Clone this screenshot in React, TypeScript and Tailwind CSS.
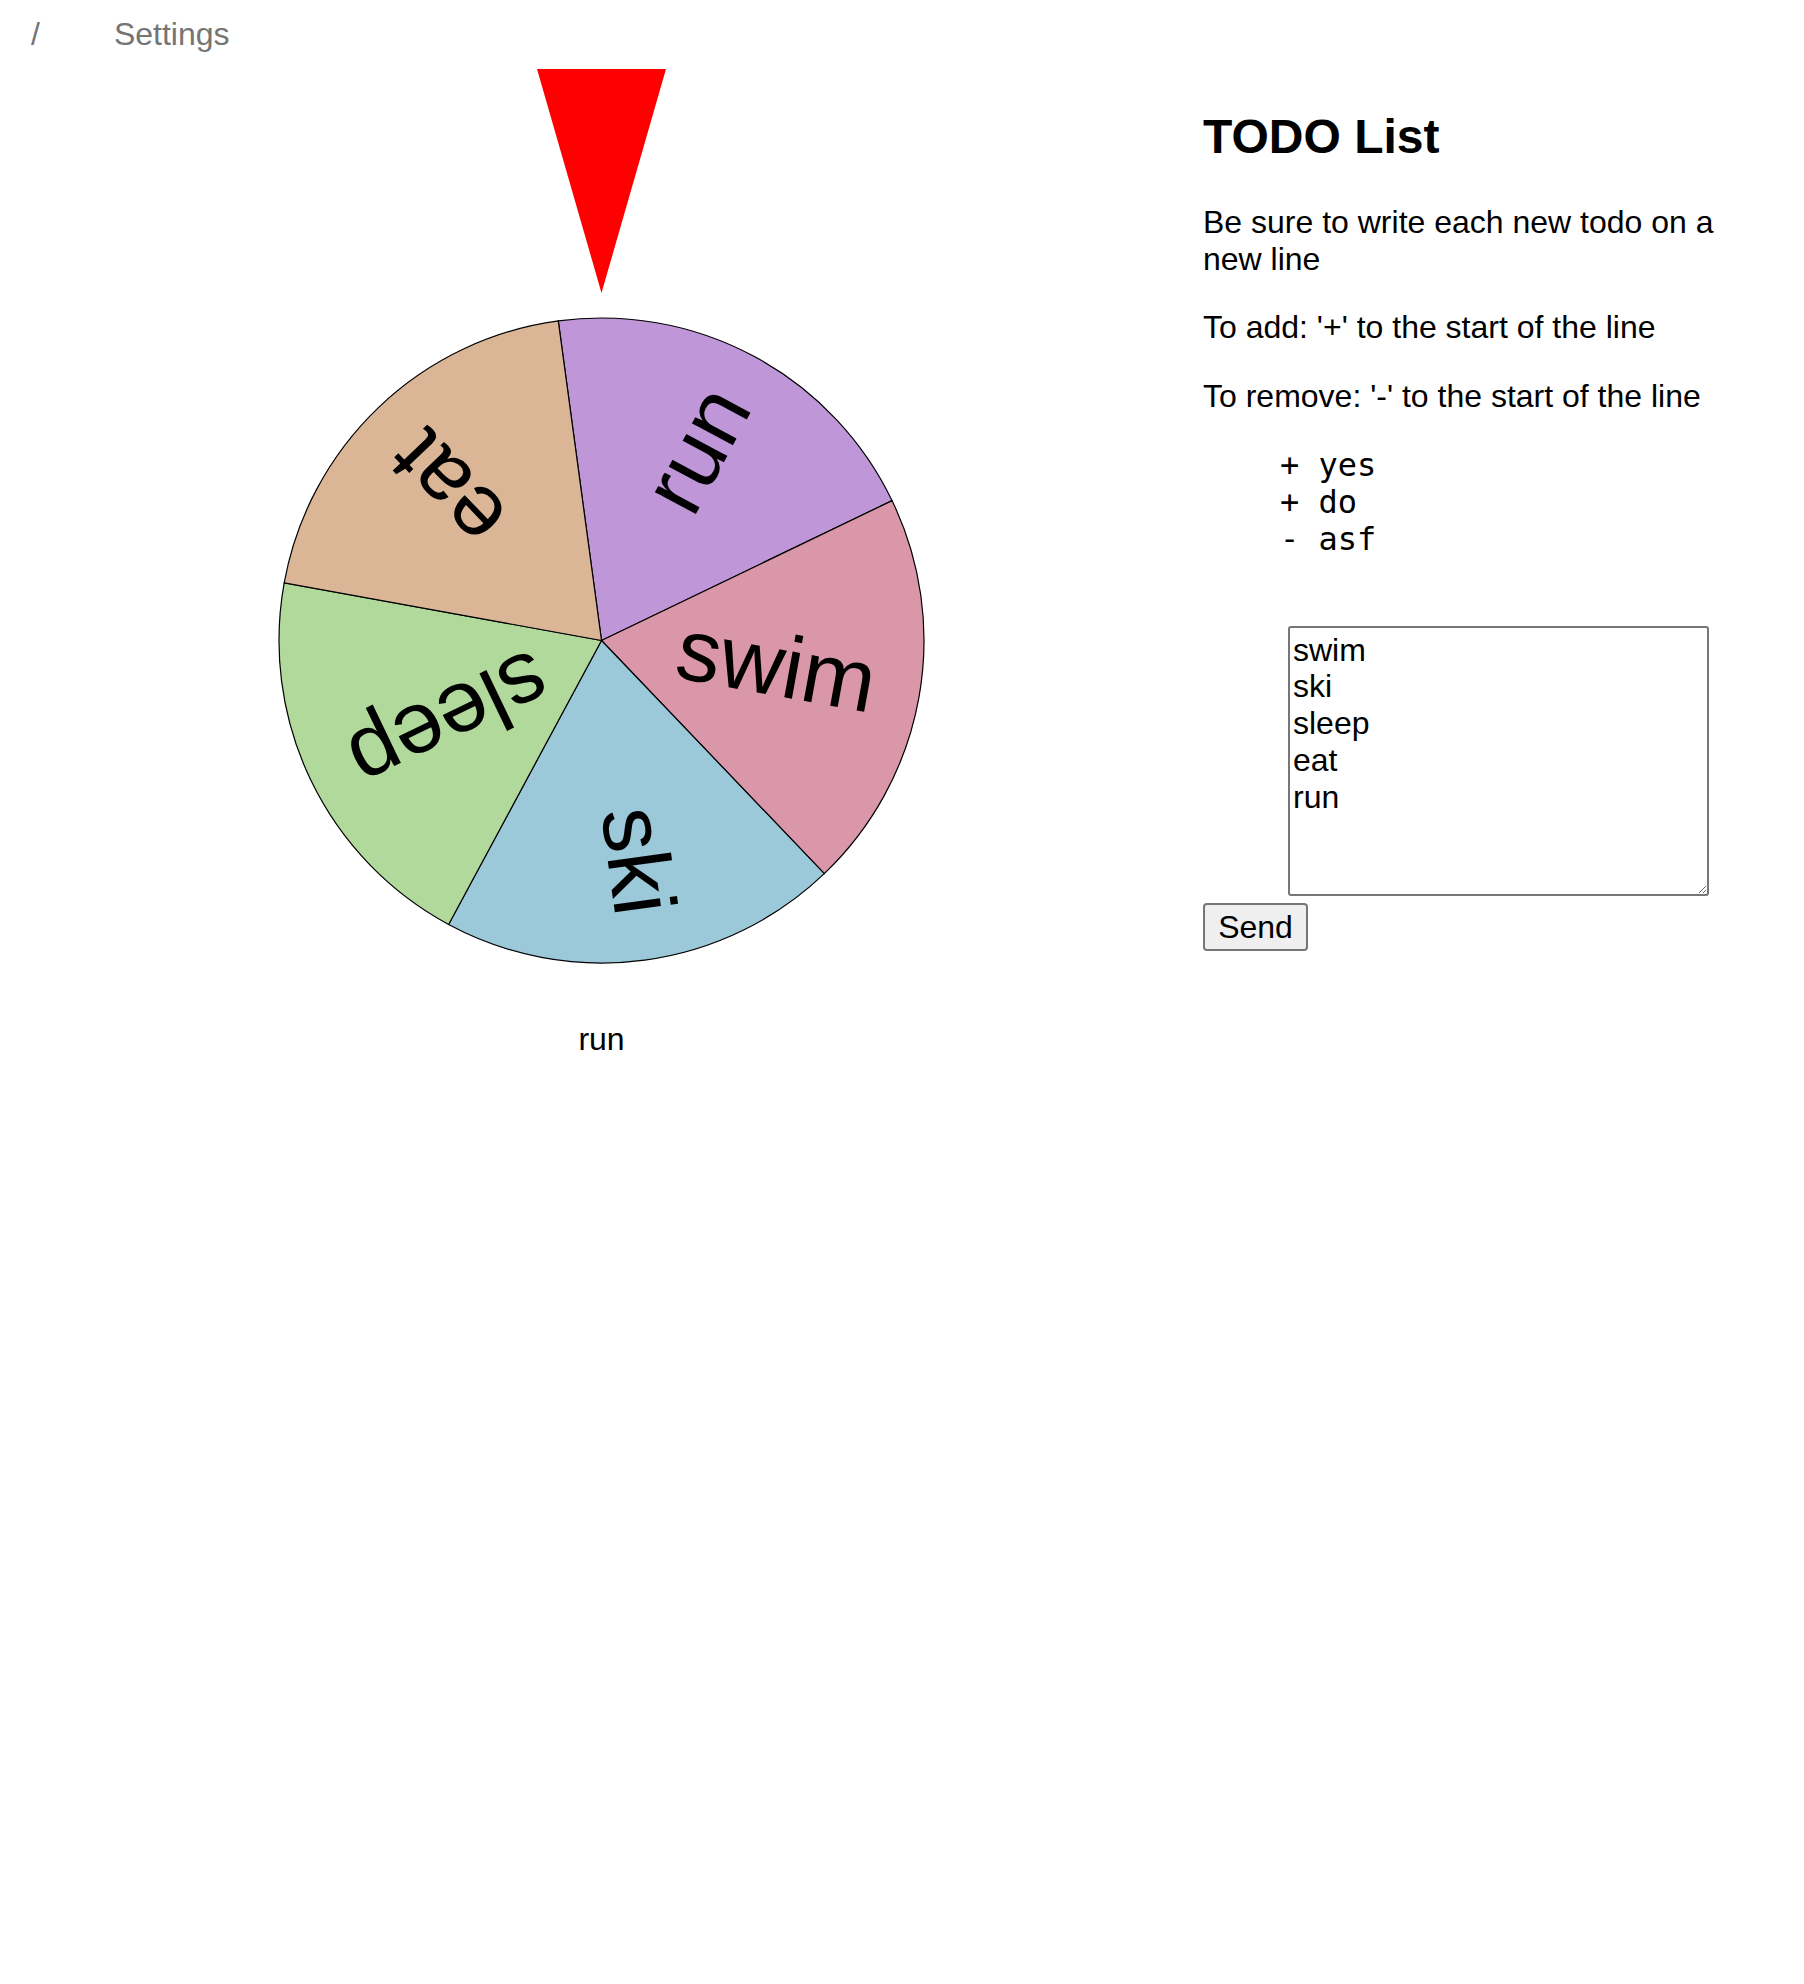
import React from "react";

type Slice = { label: string; color: string };

const slices: Slice[] = [
  { label: "run", color: "#bf97d8" },
  { label: "swim", color: "#da97a9" },
  { label: "ski", color: "#9bc9da" },
  { label: "sleep", color: "#b1d99b" },
  { label: "eat", color: "#dab697" },
];

const R = 322.5;
const START = -7.7; // wheel rotation, degrees clockwise from top

function pt(deg: number, r: number) {
  const a = (deg * Math.PI) / 180;
  return [r * Math.sin(a), -r * Math.cos(a)];
}

function Wheel() {
  const step = 360 / slices.length;
  return (
    <svg width={647} height={647} viewBox="-323.5 -323.5 647 647" className="block">
      {slices.map((s, i) => {
        const a0 = START + i * step;
        const a1 = a0 + step;
        const [x0, y0] = pt(a0, R);
        const [x1, y1] = pt(a1, R);
        return (
          <path
            key={s.label}
            d={`M0 0 L${x0} ${y0} A${R} ${R} 0 0 1 ${x1} ${y1} Z`}
            fill={s.color}
            stroke="#000"
            strokeWidth={1.2}
          />
        );
      })}
      {slices.map((s, i) => {
        const mid = START + i * step + step / 2;
        return (
          <text
            key={s.label + "-t"}
            transform={`rotate(${mid - 90})`}
            x={277}
            y={0}
            textAnchor="end"
            dominantBaseline="middle"
            fontSize={88}
            fontFamily="'Liberation Sans', Arial, sans-serif"
            fill="#000"
          >
            {s.label}
          </text>
        );
      })}
    </svg>
  );
}

export default function App() {
  return (
    <div className="min-h-screen bg-white font-['Liberation_Sans',Arial,sans-serif] text-black">
      {/* nav */}
      <nav className="flex items-center pl-[31px] pt-[16px] text-[32px] leading-[36.8px] text-[#757575]">
        <span>/</span>
        <span className="ml-[74px]">Settings</span>
      </nav>

      <div className="flex pt-[16px]">
        {/* wheel */}
        <div className="w-[1203px] flex flex-col items-center">
          <svg width={129} height={224} viewBox="0 0 129 224" className="block">
            <polygon points="0,0 129,0 64.5,224" fill="#ff0000" />
          </svg>
          <div className="mt-[24px]">
            <Wheel />
          </div>
          <div className="mt-[57px] text-[32px] leading-[36.8px]">run</div>
        </div>

        {/* todo */}
        <div className="w-[560px]">
          <h1 className="mt-[40px] mb-[40px] text-[48px] leading-[55px] font-bold">TODO List</h1>
          <p className="my-[32px] text-[32px] leading-[36.8px]">
            Be sure to write each new todo on a new line
          </p>
          <p className="my-[32px] text-[32px] leading-[36.8px]">To add: '+' to the start of the line</p>
          <p className="my-[32px] text-[32px] leading-[36.8px]">To remove: '-' to the start of the line</p>
          <pre className="my-[32px] pl-[77px] font-['DejaVu_Sans_Mono',monospace] text-[32px] leading-[37.2px]">
            {"+ yes\n+ do\n- asf"}
          </pre>
          <div className="mt-[67px]">
            <textarea
              defaultValue={"swim\nski\nsleep\neat\nrun"}
              className="block ml-[85px] w-[421px] h-[270px] border-2 border-[#767676] rounded-[3px] pt-[4px] pb-[4px] pl-[3px] pr-[4px] text-[32px] leading-[36.8px] resize font-['Liberation_Sans',Arial,sans-serif] outline-none"
            />
            <button className="mt-[7px] w-[105px] h-[48px] border-2 border-[#767676] rounded-[4px] bg-[#efefef] text-[32px] leading-[36px] text-black">
              Send
            </button>
          </div>
        </div>
      </div>
    </div>
  );
}
